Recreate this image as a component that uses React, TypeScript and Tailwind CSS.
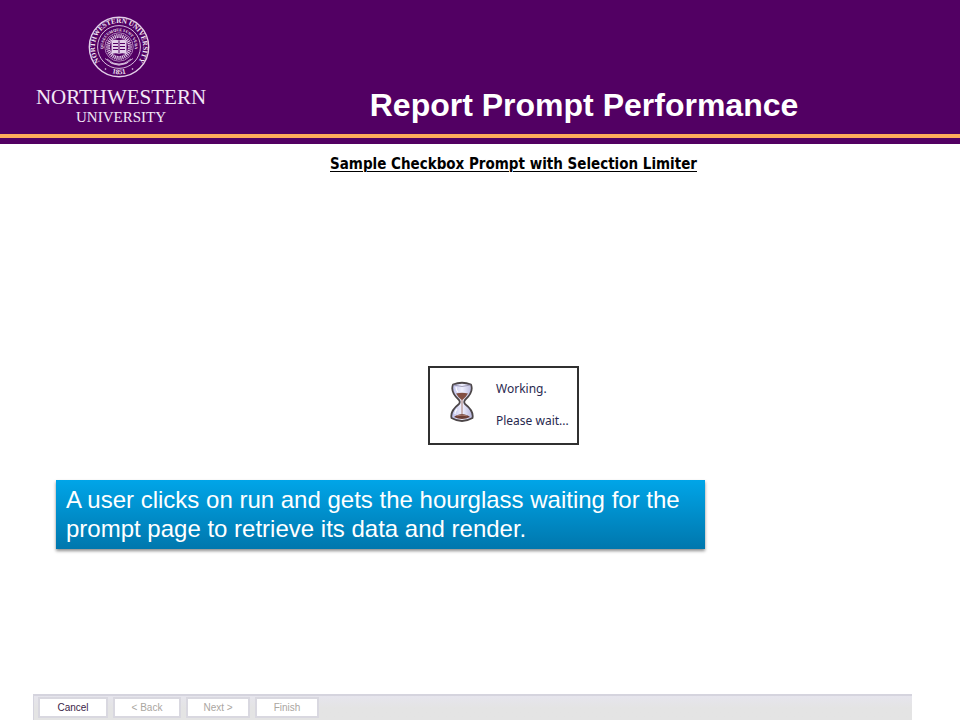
import React from "react";

const RAYS = Array.from({ length: 36 }, (_, i) => i * 10);

function Seal() {
  return (
    <svg viewBox="0 0 62 62" className="mr-1 size-[62px]" role="img" aria-label="University seal">
      <defs>
        <path id="outerArc" d="M11.8 45.6 A24.1 24.1 0 1 1 50.2 45.6" />
        <path id="yearArc" d="M20 55.8 A27.2 27.2 0 0 0 42 55.8" />
        <path id="innerArc" d="M17.2 39 A15.9 15.9 0 1 1 44.8 39" />
      </defs>
      <g fill="none" stroke="#e3cfe9">
        <circle cx="31" cy="31" r="29.7" strokeWidth="1.4" />
        <circle cx="31" cy="31" r="21.4" strokeWidth="0.9" />
        <circle cx="31" cy="31" r="14.2" strokeWidth="0.6" />
        <path d="M17 42.5 Q31 56 45 42.5 M19 43 Q31 53.5 43 43 M22 46.5 Q31 50 40 46.5" strokeWidth="0.8" />
        {RAYS.map((a) => (
          <path key={a} d="M31 18 V22" strokeWidth="1.1" transform={`rotate(${a} 31 31)`} />
        ))}
      </g>
      <path d="M23.5 24.5 Q28 23 31 24.5 Q34 23 38.5 24.5 V38 Q34 36.5 31 38 Q28 36.5 23.5 38 Z" fill="#e3cfe9" />
      <path
        d="M25 27.5 H30 M25 30.5 H30 M25 33.5 H30 M32 27.5 H37 M32 30.5 H37 M32 33.5 H37 M31 25 V37.5"
        stroke="#520063"
        strokeWidth="1"
      />
      <g fill="#f6edf8" className="font-['Liberation_Serif',serif]">
        <text className="text-[7px] font-bold">
          <textPath href="#outerArc" startOffset="50%" textAnchor="middle">
            NORTHWESTERN UNIVERSITY
          </textPath>
        </text>
        <text className="text-[7px] font-bold">
          <textPath href="#yearArc" startOffset="50%" textAnchor="middle">
            1851
          </textPath>
        </text>
        <text className="text-[4px] font-bold">
          <textPath href="#innerArc" startOffset="50%" textAnchor="middle">
            QUAECUMQUE SUNT VERA
          </textPath>
        </text>
      </g>
      <circle cx="17.5" cy="53" r="0.8" fill="#ead9ef" />
      <circle cx="44.5" cy="53" r="0.8" fill="#ead9ef" />
    </svg>
  );
}

function Hourglass() {
  return (
    <svg viewBox="0 0 24 42" className="h-[42px] w-6" aria-hidden="true">
      <defs>
        <linearGradient id="glass" x1="0" x2="1">
          <stop offset="0" stopColor="#b9bbea" />
          <stop offset="0.5" stopColor="#f1f1ff" />
          <stop offset="1" stopColor="#b4b3dc" />
        </linearGradient>
      </defs>
      <path
        d="M3 3.5 Q12 0 21 3.5 Q24 11 15 19 Q13.5 21 15 23 Q24 30 22.5 37 Q12 43 1.5 37 Q0 30 9 23 Q10.5 21 9 19 Q0 11 3 3.5 Z"
        fill="url(#glass)"
        stroke="#4c4648"
        strokeWidth="1.8"
        strokeLinejoin="round"
      />
      <path d="M3.5 4 Q12 7 20.5 4" fill="none" stroke="#8d88a5" strokeWidth="0.8" />
      <path d="M6 12.5 Q12 11 18 12.5 Q16 16 12.5 19 H11.5 Q8 16 6 12.5 Z" fill="#835044" />
      <path d="M12 18 V33" stroke="#a57a72" strokeWidth="1" />
      <path d="M4 36 Q6 34 12 33 Q18 34 20 36 Q12 40 4 36 Z" fill="#6b3d35" />
      <path d="M7 34.8 Q12 33.5 17 34.8" fill="none" stroke="#bb8d7f" strokeWidth="0.8" />
      <path d="M6 6 Q6 9 8 11 M7 28 Q5 30 5 33" fill="none" stroke="#ffffff" strokeWidth="1.2" />
    </svg>
  );
}

const STEPS = [
  { label: "Cancel", width: "w-[70px]", disabled: false },
  { label: "< Back", width: "w-[68px]", disabled: true },
  { label: "Next >", width: "w-16", disabled: true },
  { label: "Finish", width: "w-16", disabled: true },
];

export default function App() {
  return (
    <div className="flex min-h-screen flex-col bg-white font-['Liberation_Sans',Arial,sans-serif]">
      <header className="bg-[#520063] pb-1.5 text-white">
        <div className="flex h-[134px] items-start pl-[34px]">
          <div className="flex w-[174px] flex-col items-center pt-4 font-['Liberation_Serif',serif] text-[#f3e8f6]">
            <Seal />
            <span className="mt-[7px] text-[21px] leading-6">NORTHWESTERN</span>
            <span className="text-[15px] leading-4">UNIVERSITY</span>
          </div>
          <h1 className="flex-1 pt-[87px] text-center text-[32px] leading-9 font-bold">Report Prompt Performance</h1>
        </div>
        <div className="h-1 bg-[#ffad5b]" />
      </header>

      <main className="flex flex-1 flex-col">
        <h2 className="mt-2 pl-[67px] text-center font-['DejaVu_Sans_Condensed','DejaVu_Sans',sans-serif] text-[15px] leading-6 font-bold text-black underline decoration-1 underline-offset-2">
          Sample Checkbox Prompt with Selection Limiter
        </h2>

        <div className="mt-[190px] flex justify-center pl-[47px]">
          <div
            role="status"
            className="flex h-[79px] w-[151px] items-start border-2 border-[#303030] pt-[13px] pl-5 font-['Noto_Sans',sans-serif] text-[12px] leading-4 text-[#29294f]"
          >
            <Hourglass />
            <div className="flex flex-col gap-4 pl-[22px]">
              <p>Working.</p>
              <p>Please wait...</p>
            </div>
          </div>
        </div>

        <p className="mt-[35px] mr-[255px] ml-14 bg-linear-to-b from-[#00a5e8] to-[#0077ad] px-2.5 pt-[5px] pb-1.5 text-[24px] leading-[29px] text-white shadow-[0_2px_3px_rgba(0,0,0,0.45)]">
          A user clicks on run and gets the hourglass waiting for the prompt page to retrieve its data and render.
        </p>
      </main>

      <footer className="mr-12 ml-[33px] flex h-[26px] gap-[5px] border-t-2 border-l border-[#d5d4de] bg-linear-to-b from-[#e6e5ed] to-[#e4e4e4] to-50% pt-px pl-1">
        {STEPS.map((step) => (
          <button
            key={step.label}
            type="button"
            disabled={step.disabled}
            className={`${step.width} h-[21px] border-2 border-[#d9d8e0] bg-white text-[10px] leading-4 text-[#3a1d48] disabled:text-[#aaa69f]`}
          >
            {step.label}
          </button>
        ))}
      </footer>
    </div>
  );
}
